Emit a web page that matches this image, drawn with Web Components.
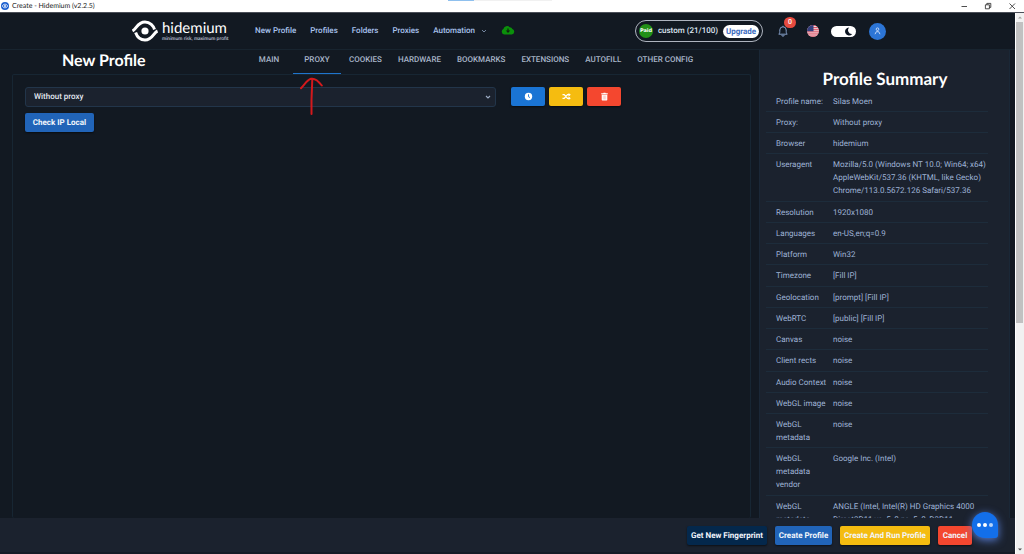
<!DOCTYPE html>
<html lang="en">
<head>
<meta charset="utf-8">
<title>Create - Hidemium (v2.2.5)</title>
<style>
html, body { margin: 0; height: 100%; overflow: hidden; background: #121922; }
body { font-family: Roboto, "Liberation Sans", sans-serif; font-size: 8px; line-height: 12px; color: #9fb3d6; text-rendering: geometricPrecision; }
</style>
</head>
<body>
<hide-app></hide-app>
<script>
const define = (name, html, setup) => {
  const t = document.createElement('template');
  t.innerHTML = html;
  customElements.define(name, class extends HTMLElement {
    constructor() {
      super();
      this.attachShadow({ mode: 'open' }).append(t.content.cloneNode(true));
    }
    connectedCallback() { if (setup) setup(this, this.shadowRoot); }
  });
};

define('title-bar', `
<style>
:host { display: flex; align-items: center; box-sizing: border-box; height: 13px; background: linear-gradient(90deg, #8fc0ee 0 26px, #f1f1f1 26px 100%) 448px 0 / 104px 1px no-repeat #fff; color: #222; border-bottom: 1px solid #4b4f58; font: 7px/12px Lato, sans-serif; padding: 0 8px 0 1px; }
.icon { width: 8px; height: 8px; margin-right: 3px; }
.name { flex: 1; }
.win { display: flex; gap: 16px; }
button { all: unset; width: 8px; height: 8px; display: block; }
svg { display: block; width: 8px; height: 8px; }
</style>
<svg class="icon" viewBox="0 0 8 8"><circle cx="4" cy="4" r="4" fill="#1c5fd0"/><path d="M1.3 4C2.5 1.6 5.5 1.6 6.7 4C5.5 6.400 2.500 6.400 1.300 4Z" fill="none" stroke="#fff" stroke-width=".8"/><circle cx="4" cy="4" r=".9" fill="#fff"/></svg>
<span class="name">Create - Hidemium (v2.2.5)</span>
<div class="win">
<button aria-label="Minimize"><svg viewBox="0 0 8 8"><path d="M1.500 4.500H7" stroke="#222" stroke-width=".8"/></svg></button>
<button aria-label="Restore"><svg viewBox="0 0 8 8" fill="none" stroke="#222" stroke-width=".8"><path d="M1.400 2.800H5.400V6.800H1.400ZM2.800 2.800V1.400H6.800V5.400H5.400"/></svg></button>
<button aria-label="Close"><svg viewBox="0 0 8 8" stroke="#222" stroke-width=".8"><path d="M1.500 1.500L7 7M7 1.500L1.500 7"/></svg></button>
</div>`);

define('brand-logo', `
<style>
:host { display: flex; align-items: center; gap: 4px; color: #fff; }
svg { width: 26px; height: 22px; display: block; flex: none; }
.words { display: flex; flex-direction: column; font-family: Lato, sans-serif; white-space: nowrap; }
b { font-size: 15px; line-height: 16px; font-weight: 400; }
small { font-size: 5px; line-height: 6px; color: #d6dae2; }
</style>
<svg viewBox="0 0 26 22" fill="none" stroke="#fff"><path d="M.5 11C4.500 9 5.500 2 13 2C18 2 21.500 6 22.500 9.500" stroke-width="3"/><path d="M25.500 11C21.500 12.500 20.500 20 13 20C8 20 4.800 16 3.600 12.500" stroke-width="3"/><circle cx="13" cy="11" r="3.600" fill="#fff" stroke="none"/></svg>
<span class="words"><b>hidemium</b><small>minimum risk, maximum profit</small></span>`);

define('plan-pill', `
<style>
:host { display: flex; align-items: center; box-sizing: border-box; height: 22px; width: 128px; border: 1px solid #aeb4bf; border-radius: 11px; padding: 0 3px; color: #dfe6f2; font-weight: 500; }
.paid { width: 14px; height: 14px; line-height: 14px; border-radius: 50%; background: #229017; color: #fff; text-align: center; font: 700 5px/14px "DejaVu Sans", sans-serif; }
.plan { flex: 1; text-align: center; }
button { all: unset; background: #fff; color: #3d6cc0; height: 13px; line-height: 13px; border-radius: 7px; width: 36px; text-align: center; font-weight: 700; }
</style>
<span class="paid">Paid</span><span class="plan">custom (21/100)</span><button>Upgrade</button>`);

define('top-nav', `
<style>
:host { display: flex; align-items: center; height: 36px; border-bottom: 1px solid #18242f; padding: 0 129px 0 132px; font-weight: 500; }
brand-logo { width: 96px; margin-right: 27px; }
nav { display: flex; gap: 14px; flex: 1; align-items: center; }
a { color: #a9c3ee; text-decoration: none; display: flex; align-items: center; gap: 6px; white-space: nowrap; }
.cloud { width: 14px; height: 10px; margin-top: -2px; }
.right { display: flex; align-items: center; }
.bell { all: unset; position: relative; width: 10px; height: 12px; margin-left: 15px; }
.bell svg { width: 10px; height: 12px; display: block; }
.bell span { position: absolute; left: 6px; top: -8px; width: 12px; height: 11px; border-radius: 6px; background: #e64a3f; color: #fff; font-size: 7px; line-height: 11px; text-align: center; }
.flag { width: 12px; height: 12px; margin-left: 19px; }
label { margin-left: 12px; display: flex; position: relative; }
input { appearance: none; margin: 0; width: 25px; height: 11px; border-radius: 6px; background: #fff; }
label svg { position: absolute; right: 3px; top: 1px; width: 9px; height: 9px; }
.me { all: unset; margin-left: 13px; width: 17px; height: 17px; border-radius: 50%; background: #2c75d6; display: grid; place-items: center; }
.me svg { width: 7px; height: 8px; }
</style>
<brand-logo></brand-logo>
<nav>
<a href="#new">New Profile</a><a href="#profiles">Profiles</a><a href="#folders">Folders</a><a href="#proxies">Proxies</a>
<a href="#automation">Automation <svg width="6" height="6" viewBox="0 0 6 6"><path d="M1 2L3 4L5 2" fill="none" stroke="#7f92ad" stroke-width=".9"/></svg></a>
<svg class="cloud" viewBox="0 0 14 10"><path d="M3.500 9.500H10.800A2.800 2.800 0 0 0 11.400 4.100A2.800 2.800 0 0 0 8.800 2.300A3.700 3.700 0 0 0 2.400 4A2.900 2.900 0 0 0 3.500 9.500Z" fill="#0b900b"/><path d="M6.400 3.500H7.600V5.500H9.200L7 8L4.800 5.500H6.400Z" fill="#10230f"/></svg>
</nav>
<div class="right">
<plan-pill></plan-pill>
<button class="bell" aria-label="Notifications"><svg viewBox="0 0 10 12" fill="none" stroke="#86a0c8" stroke-width="1"><path d="M.8 9.200H9.200C8 8 8.200 6.800 8.200 5A3.200 3.200 0 0 0 1.800 5C1.800 6.800 2 8 .8 9.200ZM5 1.800V.8M3.800 10A1.200 1.200 0 0 0 6.200 10"/></svg><span>0</span></button>
<svg class="flag" viewBox="0 0 12 12"><defs><clipPath id="r"><circle cx="6" cy="6" r="6"/></clipPath></defs><g clip-path="url(#r)"><path fill="#f4e8ec" d="M0 0H12V12H0Z"/><path stroke="#d93c50" stroke-width=".95" d="M0 .5H12M0 2.400H12M0 4.300H12M0 6.200H12M0 8.100H12M0 10H12M0 11.800H12"/><path fill="#34407e" d="M0 0H6.500V6.300H0Z"/></g></svg>
<label><input type="checkbox" checked aria-label="Dark mode"><svg viewBox="0 0 9 9"><path d="M5.200 .5A4 4 0 1 0 8.200 7A3.800 3.800 0 0 1 5.200 .5Z" fill="#0d1522"/></svg></label>
<button class="me" aria-label="Account"><svg viewBox="0 0 7 8" fill="none" stroke="#cfe0fa" stroke-width=".9"><circle cx="3.500" cy="2.200" r="1.300"/><path d="M1 7.200L2.300 4.700H4.700L6 7.200"/></svg></button>
</div>`);

define('config-tabs', `
<style>
:host { display: flex; align-items: stretch; height: 24px; font-weight: 500; }
h1 { margin: 0; width: 245px; box-sizing: border-box; padding-left: 62px; color: #fff; font: 700 16px/22px Lato, sans-serif; white-space: nowrap; }
nav { display: flex; }
a { min-width: 48px; box-sizing: border-box; padding: 0 8px; text-align: center; line-height: 20px; color: #a9b6c9; text-decoration: none; white-space: nowrap; }
a[aria-current] { border-bottom: 1px solid #1f74cc; }
</style>
<h1>New Profile</h1>
<nav><a href="#main">MAIN</a><a href="#proxy" aria-current="page">PROXY</a><a href="#cookies">COOKIES</a><a href="#hardware">HARDWARE</a><a href="#bookmarks">BOOKMARKS</a><a href="#extensions">EXTENSIONS</a><a href="#autofill">AUTOFILL</a><a href="#other">OTHER CONFIG</a></nav>`);

define('app-button', `
<style>
:host { display: block; --bg: #2164b8; }
:host([tone="blue"]) { --bg: #1a74d4; }
:host([tone="yellow"]) { --bg: #f5bc10; }
:host([tone="red"]) { --bg: #f4472f; }
:host([tone="navy"]) { --bg: #04284c; }
button { all: unset; box-sizing: border-box; display: grid; place-items: center; width: 100%; height: 19px; line-height: 19px; border-radius: 2px; background: var(--bg); color: #f2f6fc; font-weight: 700; text-align: center; white-space: nowrap; box-shadow: 0 1px 2px #0008; }
</style>
<button><slot></slot></button>`, (el, root) => {
  if (el.title) root.querySelector('button').setAttribute('aria-label', el.title);
});

define('proxy-panel', `
<style>
:host { display: block; box-sizing: border-box; margin: 0 8px 0 12px; border: 1px solid #172633; border-radius: 2px; padding: 12px; position: relative; }
.row { display: flex; margin-bottom: 6px; }
.pick { flex: 1; position: relative; margin-right: 15px; display: flex; }
select { appearance: none; box-sizing: border-box; width: 100%; height: 20px; background: #1b222e; border: 1px solid #22354a; border-radius: 3px; color: #e3e9f2; font: 500 8px/12px Roboto, sans-serif; text-rendering: inherit; padding: 0 8px; margin: 0; }
.pick svg { position: absolute; right: 5px; top: 7px; width: 6px; height: 6px; }
.tools { display: flex; gap: 4px; margin-right: 117px; }
.tools app-button { width: 34px; }
.tools svg { width: 9px; height: 9px; display: block; }
.check { width: 69px; }
.arrow { position: absolute; left: 286px; top: 2px; width: 30px; height: 40px; }
</style>
<div class="row">
<label class="pick"><select aria-label="Proxy type"><option>Without proxy</option></select><svg viewBox="0 0 6 6"><path d="M1 2L3 4L5 2" fill="none" stroke="#9dacc4" stroke-width="1.100"/></svg></label>
<div class="tools">
<app-button tone="blue" title="History"><svg viewBox="0 0 9 9"><circle cx="4.500" cy="4.500" r="3.700" fill="#fff"/><path d="M4.500 2.300V4.700L6 5.600" fill="none" stroke="#1a74d4" stroke-width=".9"/></svg></app-button>
<app-button tone="yellow" title="Shuffle"><svg viewBox="0 0 9 9"><path d="M.5 2.700H2.200L5.500 6.300H7M.5 6.300H2.200L5.500 2.700H7" fill="none" stroke="#fff" stroke-width="1.200"/><path d="M6.600 1L8.800 2.700L6.600 4.400ZM6.600 4.600L8.800 6.300L6.600 8Z" fill="#fff"/></svg></app-button>
<app-button tone="red" title="Delete"><svg viewBox="0 0 9 9"><path d="M1.200 1.300H3.200L3.600 .7H5.400L5.800 1.300H7.800V2.200H1.200ZM1.700 2.700H7.300V7.700Q7.300 8.400 6.600 8.400H2.400Q1.700 8.400 1.700 7.700Z" fill="#fff"/><path d="M3.300 3.500V7.500M4.500 3.500V7.500M5.700 3.500V7.500" stroke="#f4a296" stroke-width=".5"/></svg></app-button>
</div></div>
<app-button class="check">Check IP Local</app-button>
<svg class="arrow" viewBox="-4 0 30 40" fill="none" stroke="#d3191c" stroke-width="2" stroke-linecap="round" stroke-linejoin="round"><path d="M8.500 37V23L9.300 2M-2 11.200C2 7 4 3 8 1.800C12 .8 15 3.500 18.800 8.500"/></svg>`);

define('summary-panel', `
<style>
:host { display: block; background: #1b222e; border: 1px solid #1a2736; border-width: 0 1px; padding: 18px 21px 0 6px; overflow: hidden; }
h2 { margin: 0 0 0 -1px; padding-left: 17px; text-align: center; color: #fff; font: 700 17px/22px Lato, sans-serif; }
table { border-collapse: separate; border-spacing: 0; width: 100%; margin-top: 1px; table-layout: fixed; line-height: 13px; }
col.k { width: 62px; }
th, td { padding: 4px 0 3px 5px; text-align: left; vertical-align: top; font-weight: 400; border-bottom: 1px solid #1d2c3b; }
th { padding-left: 10px; }
tr:nth-child(4n) > * { padding-bottom: 4px; }
</style>
<h2>Profile Summary</h2>
<table><colgroup><col class="k"><col></colgroup><tbody></tbody></table>`, (el, root) => {
  const rows = [
    ['Profile name:', 'Silas Moen'], ['Proxy:', 'Without proxy'], ['Browser', 'hidemium'],
    ['Useragent', 'Mozilla/5.0 (Windows NT 10.0; Win64; x64) AppleWebKit/537.36 (KHTML, like Gecko) Chrome/113.0.5672.126 Safari/537.36'],
    ['Resolution', '1920x1080'], ['Languages', 'en-US,en;q=0.9'], ['Platform', 'Win32'], ['Timezone', '[Fill IP]'],
    ['Geolocation', '[prompt] [Fill IP]'], ['WebRTC', '[public] [Fill IP]'], ['Canvas', 'noise'], ['Client rects', 'noise'],
    ['Audio Context', 'noise'], ['WebGL image', 'noise'], ['WebGL metadata', 'noise'],
    ['WebGL metadata vendor', 'Google Inc. (Intel)'],
    ['WebGL metadata', 'ANGLE (Intel, Intel(R) HD Graphics 4000 Direct3D11 vs_5_0 ps_5_0, D3D11-']
  ];
  const body = root.querySelector('tbody');
  for (const [k, v] of rows) {
    const tr = body.insertRow();
    const th = document.createElement('th');
    th.scope = 'row';
    th.textContent = k;
    tr.append(th);
    tr.insertCell().textContent = v;
  }
});

define('action-bar', `
<style>
:host { display: flex; align-items: center; justify-content: flex-end; gap: 8px; height: 34px; background: #1b222e; border-bottom: 2px solid #151b26; padding-right: 43px; position: relative; }
.w1 { width: 80px; } .w2 { width: 57px; } .w3 { width: 90px; } .w4 { width: 34px; }
.chat { all: unset; position: absolute; right: 17px; top: -6px; width: 26px; height: 26px; background: #136fea; border-radius: 13px 13px 3px 13px; box-shadow: 0 2px 8px #5a7fd8; display: flex; align-items: center; justify-content: center; gap: 2px; }
.chat i { width: 4px; height: 4px; border-radius: 50%; background: #fff; }
.chat i:last-child { background: #b5d3fa; }
</style>
<app-button class="w1" tone="navy">Get New Fingerprint</app-button>
<app-button class="w2">Create Profile</app-button>
<app-button class="w3" tone="yellow">Create And Run Profile</app-button>
<app-button class="w4" tone="red">Cancel</app-button>
<button class="chat" aria-label="Chat"><i></i><i></i><i></i></button>`);

define('scroll-rail', `
<style>
:host { display: flex; flex-direction: column; box-sizing: border-box; width: 9px; background: #f1f1f1; border-left: 1px solid #fff; }
svg { width: 8px; height: 9px; flex: none; }
.thumb { flex: 301; background: #c1c1c1; margin: 0 1px 0 0; }
.rest { flex: 222; }
</style>
<svg viewBox="0 0 8 9"><path d="M2 5.500L4 3.500L6 5.500Z" fill="#a3a3a3"/></svg>
<div class="thumb"></div><div class="rest"></div>
<svg viewBox="0 0 8 9"><path d="M2 3.500L4 5.500L6 3.500Z" fill="#505050"/></svg>`);

define('hide-app', `
<style>
:host { display: flex; flex-direction: column; height: 100vh; }
.body { flex: 1; display: flex; min-height: 0; }
.app { flex: 1; display: flex; flex-direction: column; min-width: 0; }
.cols { flex: 1; min-height: 0; display: grid; grid-template-columns: 1fr 251px; margin-right: 5px; }
.left { display: flex; flex-direction: column; min-width: 0; }
proxy-panel { flex: 1; border-bottom: 0; }
</style>
<title-bar></title-bar>
<div class="body">
<div class="app"><top-nav></top-nav>
<div class="cols"><div class="left"><config-tabs></config-tabs><proxy-panel></proxy-panel></div><summary-panel></summary-panel></div>
<action-bar></action-bar></div>
<scroll-rail></scroll-rail>
</div>`);
</script>
</body>
</html>
